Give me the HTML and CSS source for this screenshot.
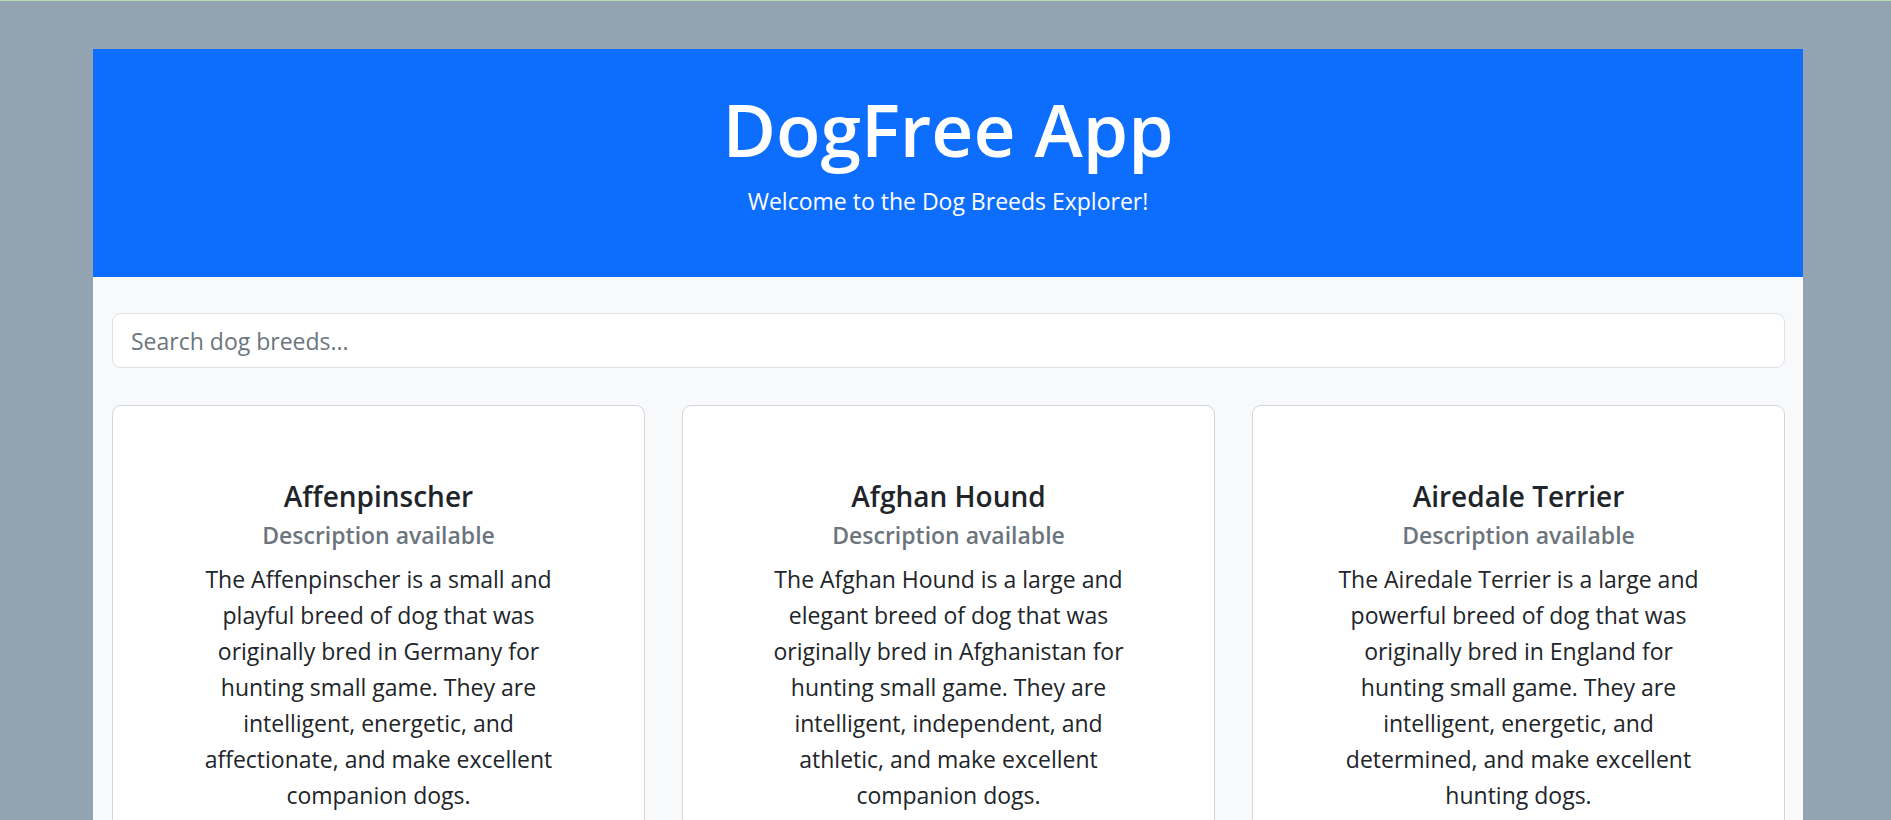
FILE: index.html
```html
<!DOCTYPE html>
<html lang="en">
<head>
<meta charset="utf-8">
<title>DogFree App</title>
<link rel="stylesheet" href="styles.css">
</head>
<body>
<div class="app">
  <header class="hero">
    <h1 class="hero-title">DogFree App</h1>
    <p class="hero-lead">Welcome to the Dog Breeds Explorer!</p>
  </header>
  <main class="content">
    <input class="search" type="text" placeholder="Search dog breeds...">
    <div class="grid">
      <div class="card">
        <div class="card-body">
          <h5 class="card-title">Affenpinscher</h5>
          <h6 class="card-subtitle">Description available</h6>
          <p class="card-text">The Affenpinscher is a small and playful breed of dog that was originally bred in Germany for hunting small game. They are intelligent, energetic, and affectionate, and make excellent companion dogs.</p>
        </div>
      </div>
      <div class="card">
        <div class="card-body">
          <h5 class="card-title">Afghan Hound</h5>
          <h6 class="card-subtitle">Description available</h6>
          <p class="card-text">The Afghan Hound is a large and elegant breed of dog that was originally bred in Afghanistan for hunting small game. They are intelligent, independent, and athletic, and make excellent companion dogs.</p>
        </div>
      </div>
      <div class="card">
        <div class="card-body">
          <h5 class="card-title">Airedale Terrier</h5>
          <h6 class="card-subtitle">Description available</h6>
          <p class="card-text">The Airedale Terrier is a large and powerful breed of dog that was originally bred in England for hunting small game. They are intelligent, energetic, and determined, and make excellent hunting dogs.</p>
        </div>
      </div>
    </div>
  </main>
</div>
</body>
</html>
```
FILE: styles.css
```css
html, body {
  margin: 0;
  padding: 0;
}
body {
  background: #94a3b2;
  border-top: 1px solid #b7dcb2;
  padding: 48px 88px 0 93px;
  font-family: "Open Sans", "Noto Sans", sans-serif;
  color: #212529;
}
.app {
  background: #f8f9fa;
  min-height: 900px;
}
.hero {
  background: #0d6efd;
  color: #fff;
  text-align: center;
  padding: 34px 18px 36px;
}
.hero-title {
  margin: 0 0 9px;
  font-size: 73px;
  line-height: 91.2px;
  font-weight: 600;
}
.hero-lead {
  margin: 0 0 21.8px;
  font-size: 23px;
  line-height: 36px;
  font-weight: 400;
}
.content {
  padding: 36px 18px 0 19px;
}
.search {
  display: block;
  box-sizing: border-box;
  width: 100%;
  height: 55px;
  margin: 0 0 37px;
  padding: 9px 18px;
  font-family: inherit;
  font-size: 23px;
  line-height: 36px;
  color: #212529;
  background: #fff;
  border: 1px solid #dee2e6;
  border-radius: 9px;
  outline: none;
}
.search::placeholder {
  color: #6c757d;
}
.grid {
  display: grid;
  grid-template-columns: repeat(3, 1fr);
  gap: 37px;
}
.card {
  background: #fff;
  border: 1px solid #d3d5d8;
  border-radius: 9px;
  min-height: 500px;
}
.card-body {
  padding: 72px;
  text-align: center;
}
.card-title {
  margin: 0 0 12px;
  font-size: 28px;
  line-height: 36px;
  font-weight: 600;
}
.card-subtitle {
  margin: -5.5px 0 12px;
  font-size: 23px;
  line-height: 28.8px;
  font-weight: 600;
  color: #6c757d;
}
.card-text {
  margin: 0;
  font-size: 23px;
  line-height: 36px;
}
```
